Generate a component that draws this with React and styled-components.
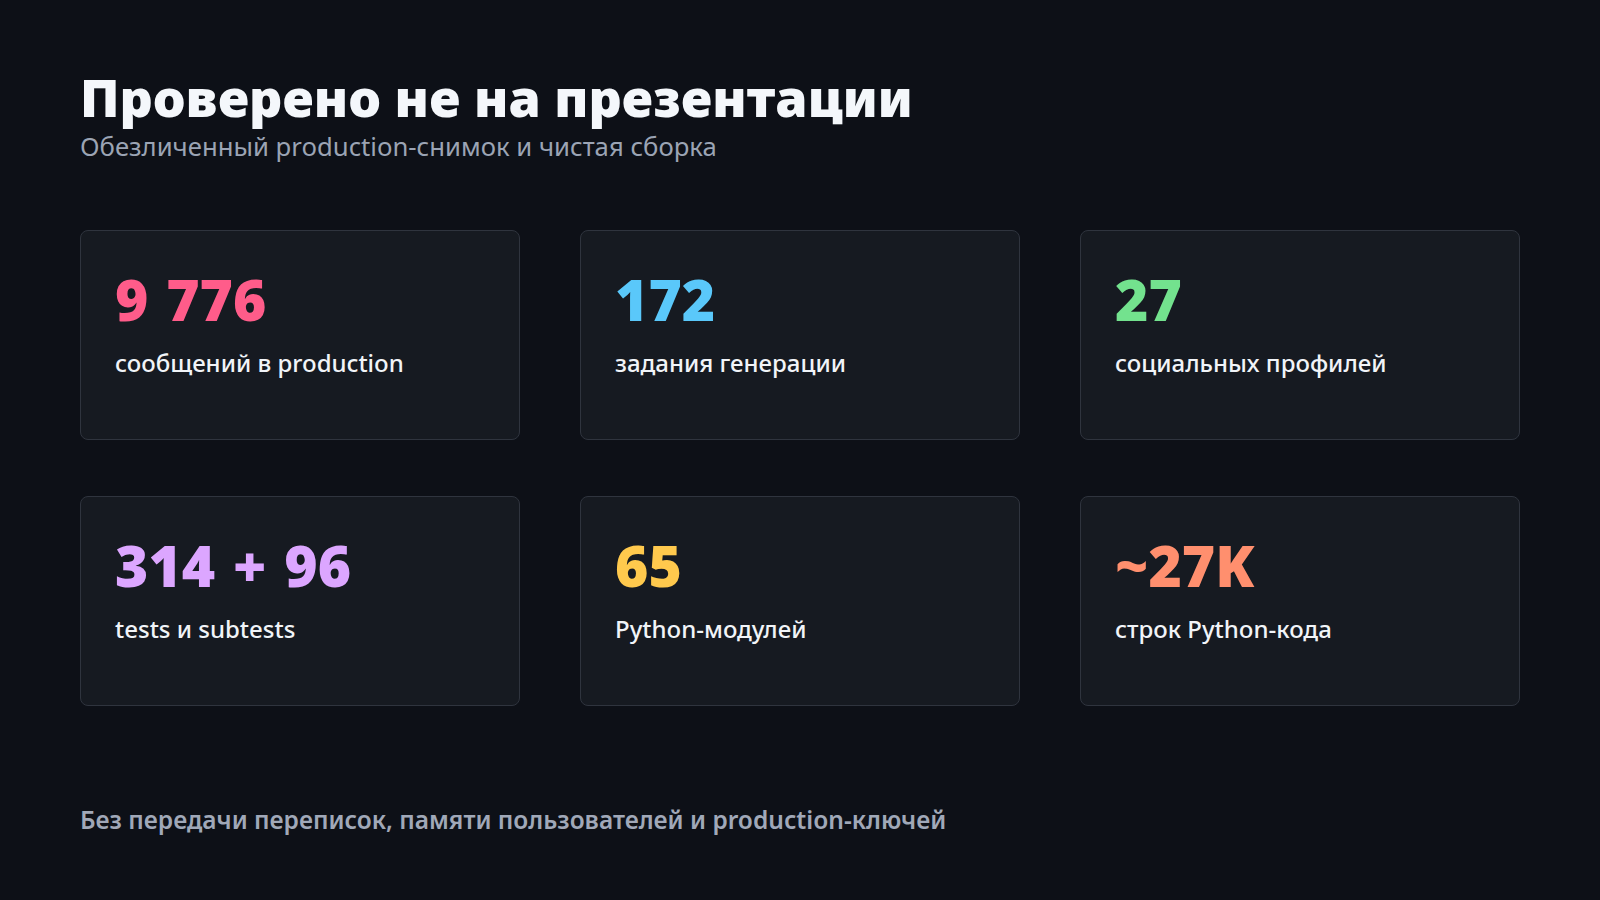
import React from "react";
import styled, { createGlobalStyle } from "styled-components";

const GlobalStyle = createGlobalStyle`
  html, body {
    margin: 0;
    padding: 0;
    background: #0d1017;
  }
  * {
    box-sizing: border-box;
  }
`;

const stats = [
  { value: "9 776", label: "сообщений в production", color: "#ff5c8a" },
  { value: "172", label: "задания генерации", color: "#5ac8fa" },
  { value: "27", label: "социальных профилей", color: "#73e28e" },
  { value: "314 + 96", label: "tests и subtests", color: "#dca6ff" },
  { value: "65", label: "Python-модулей", color: "#ffc94d" },
  { value: "~27K", label: "строк Python-кода", color: "#ff8f6e" },
];

export default function App() {
  return (
    <>
      <GlobalStyle />
      <Slide>
        <Header>
          <Title>Проверено не на презентации</Title>
          <Subtitle>Обезличенный production-снимок и чистая сборка</Subtitle>
        </Header>
        <Grid>
          {stats.map((s) => (
            <Card key={s.value}>
              <Value $color={s.color}>{s.value}</Value>
              <Label>{s.label}</Label>
            </Card>
          ))}
        </Grid>
        <Footer>Без передачи переписок, памяти пользователей и production-ключей</Footer>
      </Slide>
    </>
  );
}

const Slide = styled.div`
  width: 1600px;
  height: 900px;
  padding: 67px 80px 0;
  display: flex;
  flex-direction: column;
  background: #0d1017;
  font-family: "Noto Sans", "Open Sans", sans-serif;
`;

const Header = styled.div`
  display: flex;
  flex-direction: column;
  gap: 3px;
`;

const Title = styled.h1`
  margin: 0;
  font-size: 52px;
  line-height: 60px;
  font-weight: 900;
  color: #f4f7fb;
`;

const Subtitle = styled.p`
  margin: 0;
  font-size: 25.7px;
  line-height: 34px;
  font-weight: 400;
  color: #9ba4b4;
`;

const Grid = styled.div`
  margin-top: 66px;
  display: grid;
  grid-template-columns: repeat(3, 440px);
  grid-auto-rows: 210px;
  column-gap: 60px;
  row-gap: 56px;
`;

const Card = styled.div`
  background: #161a21;
  border: 1.5px solid #2f343e;
  border-radius: 8px;
  padding: 38px 34px;
  display: flex;
  flex-direction: column;
  gap: 18px;
`;

const Value = styled.div`
  font-size: 57px;
  line-height: 60px;
  font-weight: 900;
  color: ${(p) => p.$color};
  word-spacing: 3px;
`;

const Label = styled.div`
  font-size: 24px;
  line-height: 32px;
  font-weight: 500;
  color: #f1f4f8;
`;

const Footer = styled.div`
  margin-top: 98px;
  font-size: 24.5px;
  line-height: 32px;
  font-weight: 600;
  color: #a0a8b8;
`;
